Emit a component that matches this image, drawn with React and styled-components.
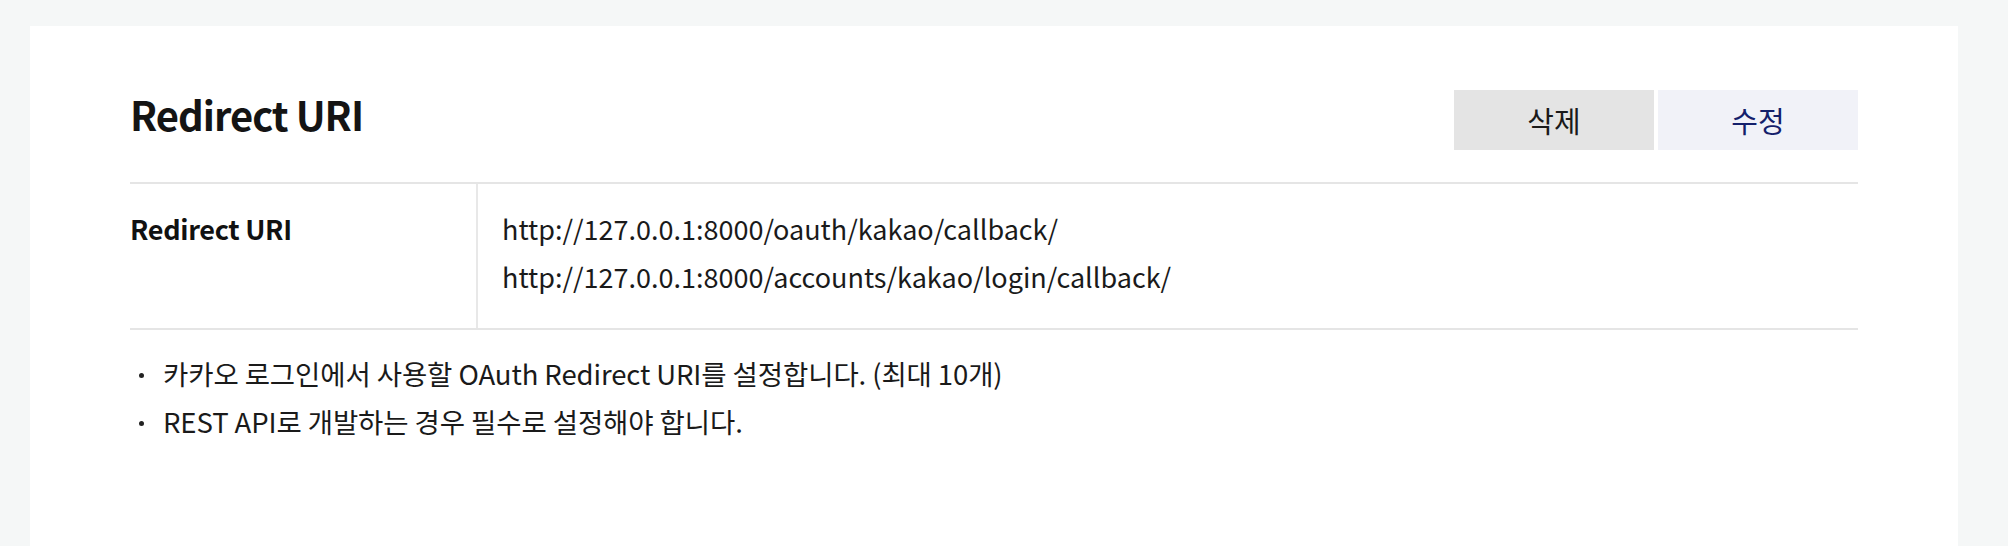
import React from "react";
import styled, { createGlobalStyle } from "styled-components";

const Global = createGlobalStyle`
  html, body { margin: 0; padding: 0; background: #f5f7f7; }
  body {
    font-family: "Noto Sans CJK KR", "Noto Sans", sans-serif;
    color: #111;
  }
`;

const Page = styled.div`
  padding: 26px 50px 0 30px;
  min-height: 100vh;
  box-sizing: border-box;
`;

const Card = styled.section`
  background: #fff;
  padding: 64px 100px 140px;
`;

const Header = styled.div`
  display: flex;
  align-items: flex-start;
  justify-content: space-between;
  padding-bottom: 32px;
  border-bottom: 2px solid #e5e5e5;
`;

const Title = styled.h2`
  margin: 4px 0 0;
  font-size: 40px;
  line-height: 40px;
  font-weight: 600;
  color: #141414;
  letter-spacing: -1px;
`;

const Actions = styled.div`
  display: flex;
  gap: 4px;
`;

const Button = styled.button`
  width: 200px;
  height: 60px;
  border: 0;
  padding: 0;
  font-family: inherit;
  font-size: 29px;
  font-weight: 400;
  cursor: pointer;
  background: ${(p) => (p.$primary ? "#f1f2f8" : "#e4e4e4")};
  color: ${(p) => (p.$primary ? "#14206b" : "#1a1a1a")};
`;

const Row = styled.div`
  display: grid;
  grid-template-columns: 346px 1fr;
  border-bottom: 2px solid #e5e5e5;
`;

const Label = styled.div`
  padding: 21px 0 27px;
  font-size: 27px;
  line-height: 48px;
  font-weight: 700;
  color: #111;
  letter-spacing: -0.3px;
`;

const Value = styled.div`
  padding: 21px 24px 27px;
  border-left: 2px solid #e8e8e8;
  font-size: 27px;
  line-height: 48px;
  color: #1a1a1a;
`;

const Notes = styled.ul`
  list-style: none;
  margin: 0;
  padding: 19px 0 0;
`;

const Note = styled.li`
  position: relative;
  padding-left: 33px;
  font-size: 27.5px;
  line-height: 48px;
  color: #1a1a1a;
  letter-spacing: -0.1px;

  &::before {
    content: "";
    position: absolute;
    left: 9px;
    top: 24px;
    width: 5px;
    height: 5px;
    border-radius: 50%;
    background: #222;
  }
`;

export default function App() {
  return (
    <>
      <Global />
      <Page>
        <Card>
          <Header>
            <Title>Redirect URI</Title>
            <Actions>
              <Button>삭제</Button>
              <Button $primary>수정</Button>
            </Actions>
          </Header>
          <Row>
            <Label>Redirect URI</Label>
            <Value>
              <div>http://127.0.0.1:8000/oauth/kakao/callback/</div>
              <div>http://127.0.0.1:8000/accounts/kakao/login/callback/</div>
            </Value>
          </Row>
          <Notes>
            <Note>카카오 로그인에서 사용할 OAuth Redirect URI를 설정합니다. (최대 10개)</Note>
            <Note>REST API로 개발하는 경우 필수로 설정해야 합니다.</Note>
          </Notes>
        </Card>
      </Page>
    </>
  );
}
